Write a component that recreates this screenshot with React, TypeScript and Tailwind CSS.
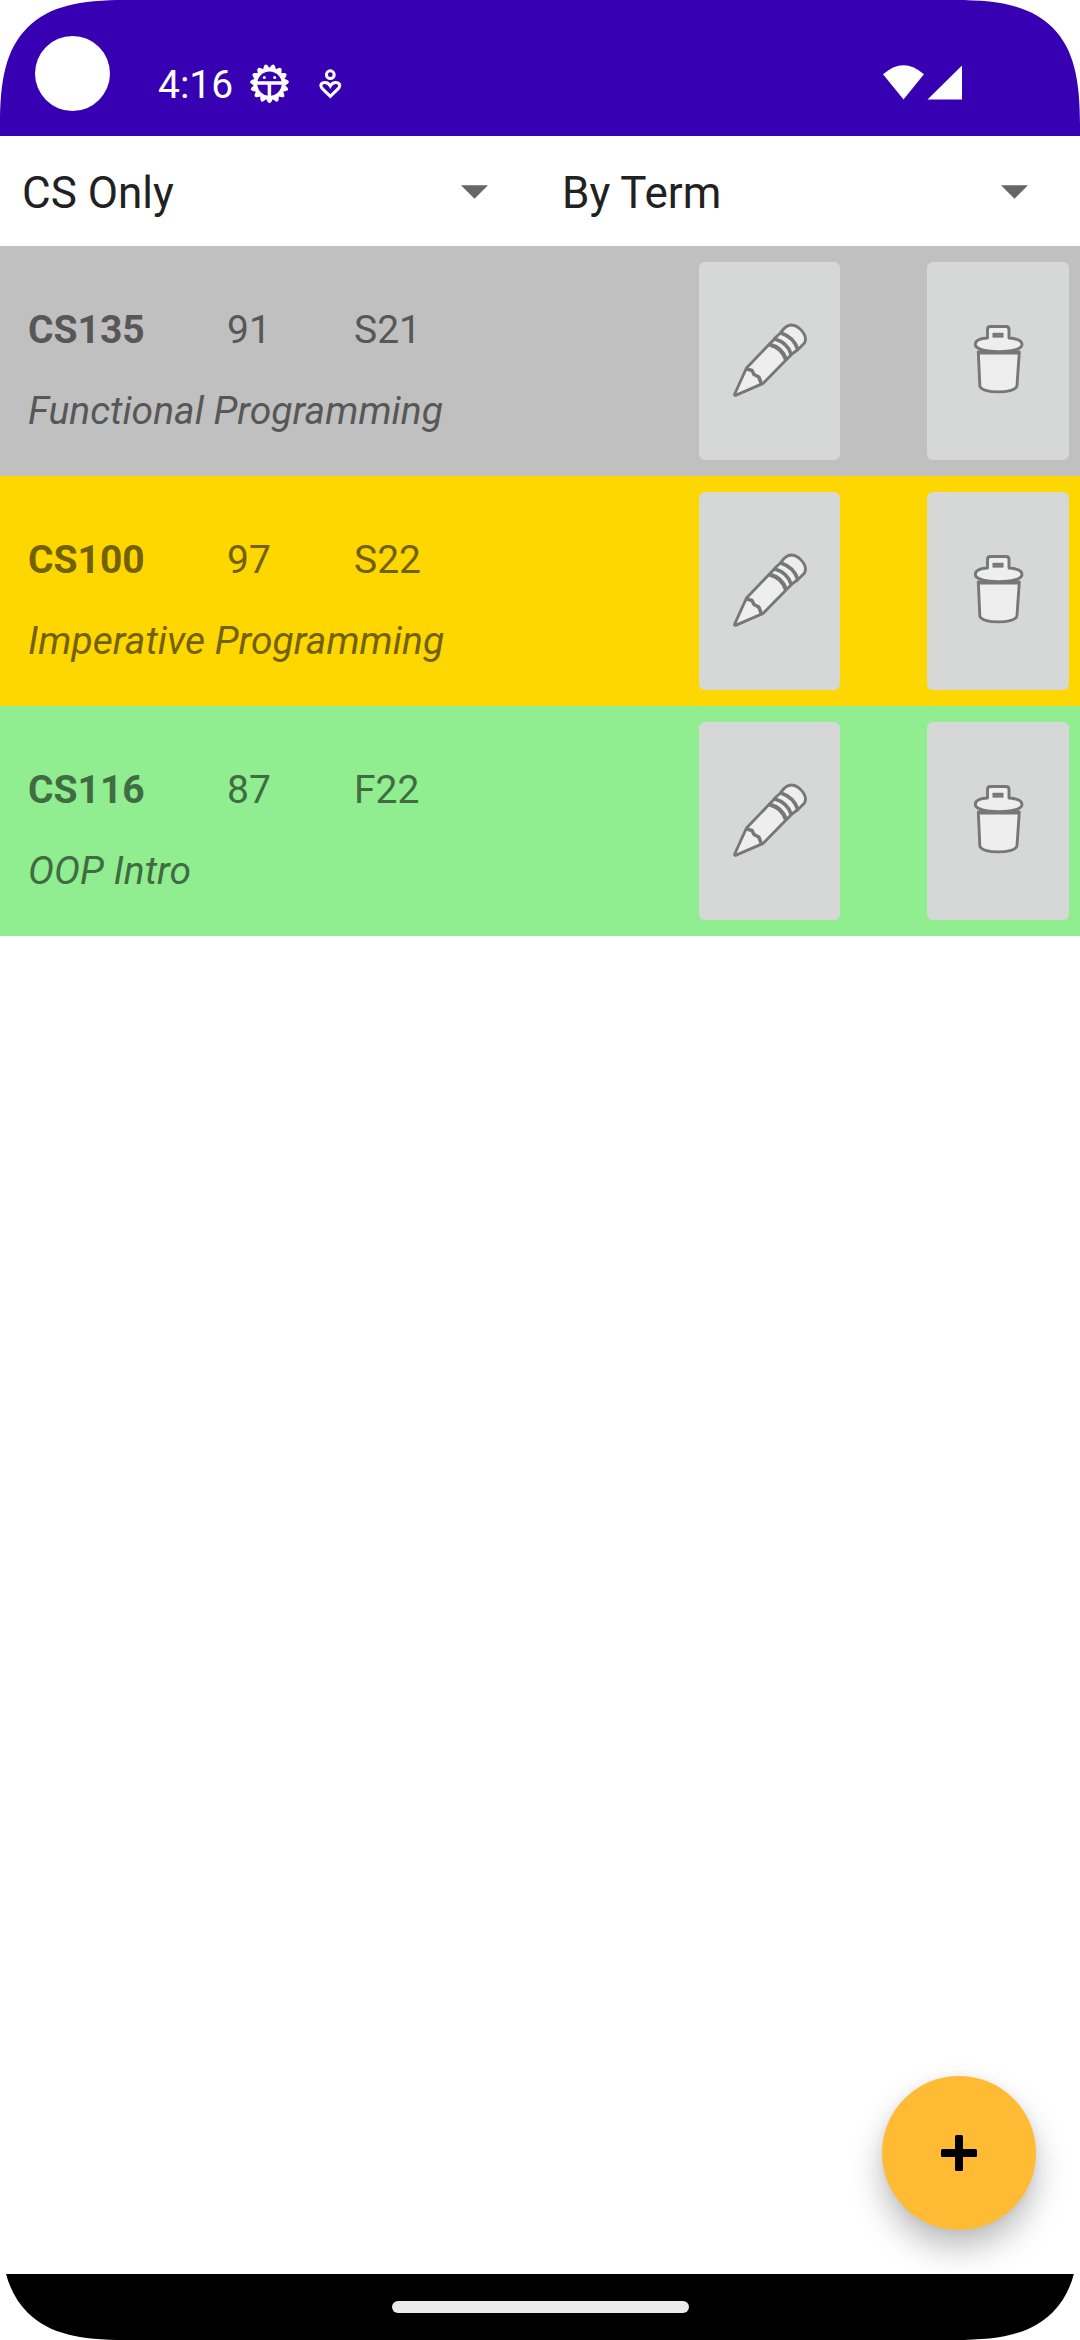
import React from "react";

const teeth = Array.from({ length: 15 }, (_, i) => i * 24);

function DebugIcon() {
  return (
    <svg className="ml-[16px] size-11 shrink-0" viewBox="248 62 44 44">
      <g fill="white">
        {teeth.map((a) => (
          <path key={a} transform={`rotate(${a} 269.5 83.7)`} d="M265.3 97.5L267.600 101.800Q269.500 104.600 271.400 101.800L273.700 97.500Z" />
        ))}
      </g>
      <circle cx="269.5" cy="83.7" r="13.7" fill="none" stroke="white" strokeWidth="3" />
      <path d="M256 83H283M269.400 83V98" stroke="white" strokeWidth="3.5" fill="none" />
      <circle cx="264.300" cy="77.400" r="1.500" fill="white" />
      <circle cx="274.700" cy="77.400" r="1.500" fill="white" />
    </svg>
  );
}

function HeartPersonIcon() {
  return (
    <svg className="ml-6 h-[38px] w-[30px] shrink-0" viewBox="316 64 30 38" fill="none" stroke="white" strokeWidth="3">
      <circle cx="330.300" cy="73.700" r="3.900" />
      <path d="M330.300 95.400L322.600 87.900C319.200 84.100 321.300 81.400 325 81.400C327.600 81.400 329.300 83.200 330.300 85C331.300 83.200 333 81.400 335.600 81.400C339.300 81.400 341.400 84.100 338 87.900Z" />
    </svg>
  );
}

function Corner({ className }: { className: string }) {
  return (
    <svg className={`absolute size-[130px] ${className}`} viewBox="0 0 130 130">
      <path d="M0 0V125C0 80 6 49 27.500 27.500C49 6 80 0 125 0Z" fill="white" />
    </svg>
  );
}

function Spinner({ label }: { label: string }) {
  return (
    <button className="flex w-[540px] items-center justify-between pt-0.5 pl-[22px] pr-[52px] text-[44px] text-[#212121]">
      <span className="pt-0.5">{label}</span>
      <svg className="h-[14px] w-[27px]" viewBox="0 0 27 14">
        <path d="M0 0.300H27L13.500 13.800Z" fill="#666" />
      </svg>
    </button>
  );
}

function PencilIcon() {
  return (
    <svg className="size-[100px] shrink-0" viewBox="0 0 100 100" fill="#eee" stroke="#777" strokeWidth="2.9" strokeLinejoin="round">
      <path d="M26.5 58L49 34.500L53 30.500L56 27L60 23.500L64 18.500Q71 12 79 18Q88 26 84.500 33L77.500 40L72.500 43.500L66.500 49.500L43 73.500L41.500 74.200L15.500 85.300Q14.300 85.500 14.700 84Z" />
      <path d="M26.500 58.800L32 60.500L34 64.500L38.800 67L41.500 74" fill="none" strokeWidth="3.500" />
      <path d="M49.500 34.500Q62 37.500 66 49.500" fill="none" strokeWidth="4.200" />
      <path d="M54.500 28.800Q68 33 71.200 44.500" fill="none" strokeWidth="3.700" />
      <path d="M61 23Q74 27.500 77.500 39" fill="none" strokeWidth="3.700" />
    </svg>
  );
}

function TrashIcon() {
  return (
    <svg className="ml-1 size-[100px] shrink-0" viewBox="0 0 100 100" fill="#eee" stroke="#777" strokeWidth="2.9" strokeLinejoin="round">
      <path d="M28.300 42L29.800 75.500C30 84 66.500 84 67 75.500L69.300 42Z" />
      <path d="M29 42.500H69" strokeWidth="3.800" />
      <path d="M37.500 28V19.500Q37.500 16.500 40.500 16.500H56Q59 16.500 59 19.500V28C67 28.500 72 30.500 72 34.500C72 44 25.300 44 25.300 34.500C25.300 30.500 30 28.500 37.500 28Z" />
      <rect x="43.500" y="23.800" width="9" height="2.800" fill="#888" strokeWidth="2" strokeLinejoin="miter" />
    </svg>
  );
}

interface Course {
  code: string;
  grade: string;
  term: string;
  title: string;
  row: string;
}

const courses: Course[] = [
  { code: "CS135", grade: "91", term: "S21", title: "Functional Programming", row: "bg-[#c0c0c0] text-[#575757]" },
  { code: "CS100", grade: "97", term: "S22", title: "Imperative Programming", row: "bg-[#ffd700] text-[#736100]" },
  { code: "CS116", grade: "87", term: "F22", title: "OOP Intro", row: "bg-[#90ee90] text-[#416b41]" },
];

function CourseRow({ course }: { course: Course }) {
  return (
    <div className={`flex h-[230px] items-start pt-4 pr-[11px] text-[39px] leading-[45px] ${course.row}`}>
      <div className="mt-[46px] flex w-[671px] flex-col gap-9 pl-7">
        <div className="flex">
          <span className="w-[199px] font-bold">{course.code}</span>
          <span className="w-[127px]">{course.grade}</span>
          <span>{course.term}</span>
        </div>
        <span className="italic">{course.title}</span>
      </div>
      <button className="ml-7 flex h-[198px] w-[141px] items-start justify-center rounded-[6px] bg-[#d6d7d7] pt-12 pl-px">
        <PencilIcon />
      </button>
      <button className="ml-[87px] flex h-[198px] w-[142px] items-start justify-center rounded-[6px] bg-[#d6d7d7] pt-12">
        <TrashIcon />
      </button>
    </div>
  );
}

export default function App() {
  return (
    <div className="relative flex h-[2340px] w-[1080px] flex-col overflow-hidden bg-white font-['Roboto',sans-serif]">
      <header className="flex h-[136px] shrink-0 bg-[#3700b3] text-white">
        <div className="mt-9 ml-[35px] size-[75px] rounded-full bg-white" />
        <div className="mt-[62px] ml-[48px] flex h-11 items-center">
          <span className="w-[74px] pt-[3px] text-[39px]">4:16</span>
          <DebugIcon />
          <HeartPersonIcon />
        </div>
        <svg className="mt-[65px] ml-auto mr-[118px] h-[35px] w-[79px]" viewBox="883 65 79 35" fill="white">
          <path d="M883 74.300Q903.500 56 924 74.300L903.500 99.500Z" />
          <path d="M927.500 99.500L962 65.500V99.500Z" />
        </svg>
      </header>
      <div className="flex h-[110px] shrink-0">
        <Spinner label="CS Only" />
        <Spinner label="By Term" />
      </div>
      <main className="flex-1">
        {courses.map((c) => (
          <CourseRow key={c.code} course={c} />
        ))}
      </main>
      <button className="absolute right-[44px] bottom-[110px] flex size-[154px] items-center justify-center rounded-full bg-[#ffbb33] shadow-[0_18px_32px_rgba(0,0,0,0.26),0_0_8px_rgba(0,0,0,0.06)]">
        <svg className="size-9" viewBox="0 0 36 36">
          <rect x="14" width="8" height="36" rx="1.500" />
          <rect y="14" width="36" height="8" rx="1.500" />
        </svg>
      </button>
      <footer className="relative flex h-[66px] shrink-0 justify-center bg-black pt-[27px]">
        <div className="h-3 w-[297px] rounded-full bg-[#ebebeb]" />
      </footer>
      <Corner className="top-0 left-0" />
      <Corner className="top-0 right-0 -scale-x-100" />
      <Corner className="bottom-0 left-0 -scale-y-100" />
      <Corner className="right-0 bottom-0 rotate-180" />
    </div>
  );
}
